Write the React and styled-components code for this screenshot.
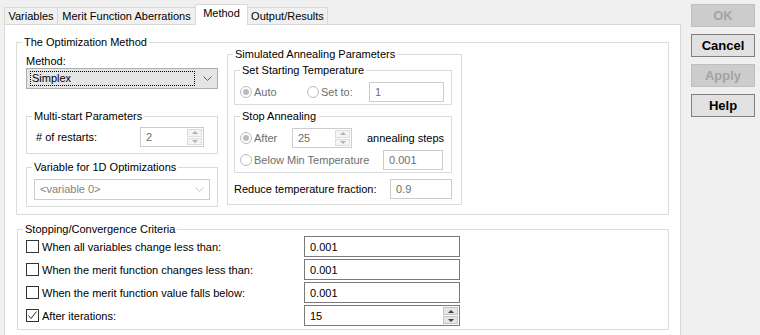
import React from 'react'
import styled, { createGlobalStyle, css } from 'styled-components'

const GlobalStyle = createGlobalStyle`
  html, body {
    margin: 0;
    padding: 0;
    overflow: hidden;
    background: #f0f0f0;
  }

  body {
    font-family: 'Liberation Sans', Arial, sans-serif;
    font-size: 11px;
    color: #000;
  }
`

const Window = styled.div`
  display: flex;
  align-items: flex-start;
  gap: 10px;
  padding: 4px 0 0 4px;
  width: 760px;
  height: 335px;
  box-sizing: border-box;
`

const TabControl = styled.div`
  display: flex;
  flex-direction: column;
  width: 677px;
`

const TabStrip = styled.div`
  display: flex;
  align-items: flex-end;
  height: 20px;
`

const Tab = styled.div`
  display: flex;
  align-items: center;
  justify-content: center;
  box-sizing: border-box;
  width: ${p => p.width}px;
  height: 17px;
  margin-left: ${p => (p.first ? 0 : -1)}px;
  border: 1px solid #d9d9d9;
  border-bottom: none;
  background: #f0f0f0;
  line-height: 14px;

  ${p =>
    p.active &&
    css`
      position: relative;
      z-index: 1;
      height: 21px;
      margin-bottom: -1px;
      padding-bottom: 4px;
      background: #fff;
    `}
`

const Panel = styled.div`
  box-sizing: border-box;
  height: 320px;
  padding: 10px 11px 0 11px;
  border: 1px solid #d9d9d9;
  background: #fff;
`

const GroupBox = styled.fieldset`
  margin: ${p => p.mt || 0}px 0 0 ${p => p.ml || 0}px;
  padding: 0;
  min-width: 0;
  border: 1px solid #dcdcdc;
  border-radius: 0;
`

const Legend = styled.legend`
  margin-left: 5px;
  padding: 0 2px;
  line-height: 14px;
  color: #000;
`

const GroupBody = styled.div`
  padding: ${p => p.pad};
`

const MethodLayout = styled.div`
  display: grid;
  grid-template-columns: 192px 235px;
  column-gap: 9px;
  align-items: start;
  padding: 5px 0 7px 9px;
`

const Column = styled.div`
  display: flex;
  flex-direction: column;
  margin-top: ${p => p.mt || 0}px;
`

const Label = styled.div`
  line-height: 14px;
  padding-left: ${p => p.pl || 0}px;
  color: ${p => (p.disabled ? '#6d6d6d' : '#000')};
  white-space: nowrap;
`

const ComboBox = styled.div`
  position: relative;
  display: flex;
  align-items: center;
  box-sizing: border-box;
  height: 21px;
  padding: 0 0 0 3px;
  border: 1px solid ${p => (p.disabled ? '#cccccc' : '#adadad')};
  background: ${p => (p.disabled ? '#fff' : '#e5e5e5')};
  color: ${p => (p.disabled ? '#838383' : '#000')};
`

const ComboText = styled.div`
  flex: 1;
  box-sizing: border-box;
  height: 15px;
  line-height: 13px;
  padding-left: 1px;
  margin-right: 22px;
  border: 1px dotted ${p => (p.focused ? '#000' : 'transparent')};
`

const Chevron = styled.svg`
  position: absolute;
  right: 5px;
  top: 7px;
`

const FieldRow = styled.div`
  display: flex;
  align-items: center;
  justify-content: space-between;
  padding-right: ${p => p.pr || 0}px;
  margin-top: ${p => p.mt || 0}px;
`

const TextBox = styled.div`
  position: relative;
  display: flex;
  align-items: center;
  box-sizing: border-box;
  width: ${p => p.width}px;
  height: ${p => p.height || 20}px;
  padding-left: 5px;
  border: 1px solid ${p => (p.disabled ? '#cccccc' : '#7a7a7a')};
  background: #fff;
  color: ${p => (p.disabled ? '#6d6d6d' : '#000')};
`

const SpinButtons = styled.div`
  position: absolute;
  top: 1px;
  right: 1px;
  bottom: 1px;
  display: flex;
  flex-direction: column;
  width: 15px;
  gap: 1px;
`

const SpinHalf = styled.div`
  flex: 1;
  display: flex;
  align-items: center;
  justify-content: center;
  background: ${p => (p.disabled ? '#f4f4f4' : '#e6e6e6')};
  border: 1px solid ${p => (p.disabled ? '#dcdcdc' : '#c4c4c4')};
`

const Arrow = styled.div`
  width: 0;
  height: 0;
  border-left: 3px solid transparent;
  border-right: 3px solid transparent;
  ${p =>
    p.down
      ? css`border-top: 3px solid ${p.disabled ? '#b0b0b0' : '#404040'};`
      : css`border-bottom: 3px solid ${p.disabled ? '#b0b0b0' : '#404040'};`}
`

const RadioGrid = styled.div`
  display: grid;
  grid-template-columns: ${p => p.cols};
  align-items: center;
  padding-left: ${p => p.pl || 0}px;
  margin-top: ${p => p.mt || 0}px;
`

const RadioItem = styled.div`
  display: flex;
  align-items: center;
  gap: 2px;
`

const RadioCircle = styled.span`
  display: flex;
  align-items: center;
  justify-content: center;
  box-sizing: border-box;
  width: 12px;
  height: 12px;
  border: 1px solid #bcbcbc;
  border-radius: 50%;
  background: #fff;

  &::after {
    content: '';
    display: ${p => (p.checked ? 'block' : 'none')};
    width: 6px;
    height: 6px;
    border-radius: 50%;
    background: #bcbcbc;
  }
`

const CriteriaGrid = styled.div`
  display: grid;
  grid-template-columns: 278px 156px;
  grid-auto-rows: 21px;
  row-gap: 2px;
  align-items: center;
  padding: 0 0 3px 8px;
`

const CheckItem = styled.div`
  display: flex;
  align-items: center;
  gap: 3px;
`

const CheckBox = styled.span`
  display: flex;
  align-items: center;
  justify-content: center;
  box-sizing: border-box;
  width: 13px;
  height: 13px;
  border: 1px solid #333;
  background: #fff;
`

const ButtonColumn = styled.div`
  display: flex;
  flex-direction: column;
  gap: 7px;
`

const DialogButton = styled.div`
  display: flex;
  align-items: center;
  justify-content: center;
  box-sizing: border-box;
  width: 64px;
  height: 23px;
  border: 1px solid ${p => (p.disabled ? '#bfbfbf' : '#7f7f7f')};
  background: ${p => (p.disabled ? '#cccccc' : '#e1e1e1')};
  color: ${p => (p.disabled ? '#a3a3a3' : '#000')};
  font-size: 13px;
  font-weight: bold;
`

function Spinner({ value, width, height, disabled }) {
  return (
    <TextBox width={width} height={height} disabled={disabled}>
      {value}
      <SpinButtons>
        <SpinHalf disabled={disabled}>
          <Arrow disabled={disabled} />
        </SpinHalf>
        <SpinHalf disabled={disabled}>
          <Arrow down disabled={disabled} />
        </SpinHalf>
      </SpinButtons>
    </TextBox>
  )
}

function Combo({ text, disabled, focused }) {
  return (
    <ComboBox disabled={disabled}>
      <ComboText focused={focused}>{text}</ComboText>
      <Chevron width="9" height="6" viewBox="0 0 9 6">
        <path
          d="M0.5 0.5 L4.5 4.5 L8.5 0.5"
          fill="none"
          stroke={disabled ? '#c2c2c2' : '#606060'}
          strokeWidth="1"
        />
      </Chevron>
    </ComboBox>
  )
}

function Radio({ label, checked }) {
  return (
    <RadioItem>
      <RadioCircle checked={checked} />
      <Label disabled>{label}</Label>
    </RadioItem>
  )
}

function Check({ label, checked }) {
  return (
    <CheckItem>
      <CheckBox>
        {checked && (
          <svg width="11" height="11" viewBox="0 0 11 11">
            <path d="M1.5 5.5 L4 8.5 L9.5 1.5" fill="none" stroke="#333" strokeWidth="1" />
          </svg>
        )}
      </CheckBox>
      <Label>{label}</Label>
    </CheckItem>
  )
}

const tabs = [
  { name: 'Variables', width: 54 },
  { name: 'Merit Function Aberrations', width: 139 },
  { name: 'Method', width: 53, active: true },
  { name: 'Output/Results', width: 81 }
]

const criteria = [
  { label: 'When all variables change less than:', value: '0.001' },
  { label: 'When the merit function changes less than:', value: '0.001' },
  { label: 'When the merit function value falls below:', value: '0.001' },
  { label: 'After iterations:', value: '15', checked: true, spin: true }
]

export default function App() {
  return (
    <>
      <GlobalStyle />
      <Window>
        <TabControl>
          <TabStrip>
            {tabs.map((tab, index) => (
              <Tab key={tab.name} width={tab.width} active={tab.active} first={index === 0}>
                {tab.name}
              </Tab>
            ))}
          </TabStrip>

          <Panel>
            <GroupBox>
              <Legend>The Optimization Method</Legend>
              <MethodLayout>
                <Column>
                  <Label>Method:</Label>
                  <Combo text="Simplex" focused />

                  <GroupBox mt={20}>
                    <Legend>Multi-start Parameters</Legend>
                    <GroupBody pad="4px 0 6px 9px">
                      <FieldRow pr={13}>
                        <Label># of restarts:</Label>
                        <Spinner value="2" width={64} disabled />
                      </FieldRow>
                    </GroupBody>
                  </GroupBox>

                  <GroupBox mt={6}>
                    <Legend>Variable for 1D Optimizations</Legend>
                    <GroupBody pad="5px 7px 6px 7px">
                      <Combo text="<variable 0>" disabled />
                    </GroupBody>
                  </GroupBox>
                </Column>

                <Column mt={-7}>
                  <GroupBox>
                    <Legend>Simulated Annealing Parameters</Legend>
                    <GroupBody pad="2px 9px 5px 6px">
                      <GroupBox>
                        <Legend>Set Starting Temperature</Legend>
                        <GroupBody pad="5px 0 2px 0">
                          <RadioGrid cols="67px 62px 75px" pl={5}>
                            <Radio label="Auto" checked />
                            <Radio label="Set to:" />
                            <TextBox width={75} disabled>1</TextBox>
                          </RadioGrid>
                        </GroupBody>
                      </GroupBox>

                      <GroupBox mt={4}>
                        <Legend>Stop Annealing</Legend>
                        <GroupBody pad="5px 0 2px 0">
                          <RadioGrid cols="52px 60px auto" pl={5}>
                            <Radio label="After" checked />
                            <Spinner value="25" width={60} disabled />
                            <Label pl={15}>annealing steps</Label>
                          </RadioGrid>
                          <RadioGrid cols="143px 60px" pl={5} mt={2}>
                            <Radio label="Below Min Temperature" />
                            <TextBox width={60} disabled>0.001</TextBox>
                          </RadioGrid>
                        </GroupBody>
                      </GroupBox>

                      <FieldRow mt={6}>
                        <Label>Reduce temperature fraction:</Label>
                        <TextBox width={62} disabled>0.9</TextBox>
                      </FieldRow>
                    </GroupBody>
                  </GroupBox>
                </Column>
              </MethodLayout>
            </GroupBox>

            <GroupBox mt={7} ml={1}>
              <Legend>Stopping/Convergence Criteria</Legend>
              <CriteriaGrid>
                {criteria.map(item => (
                  <React.Fragment key={item.label}>
                    <Check label={item.label} checked={item.checked} />
                    {item.spin ? (
                      <Spinner value={item.value} width={156} height={21} />
                    ) : (
                      <TextBox width={156} height={21}>{item.value}</TextBox>
                    )}
                  </React.Fragment>
                ))}
              </CriteriaGrid>
            </GroupBox>
          </Panel>
        </TabControl>

        <ButtonColumn>
          <DialogButton disabled>OK</DialogButton>
          <DialogButton>Cancel</DialogButton>
          <DialogButton disabled>Apply</DialogButton>
          <DialogButton>Help</DialogButton>
        </ButtonColumn>
      </Window>
    </>
  )
}
